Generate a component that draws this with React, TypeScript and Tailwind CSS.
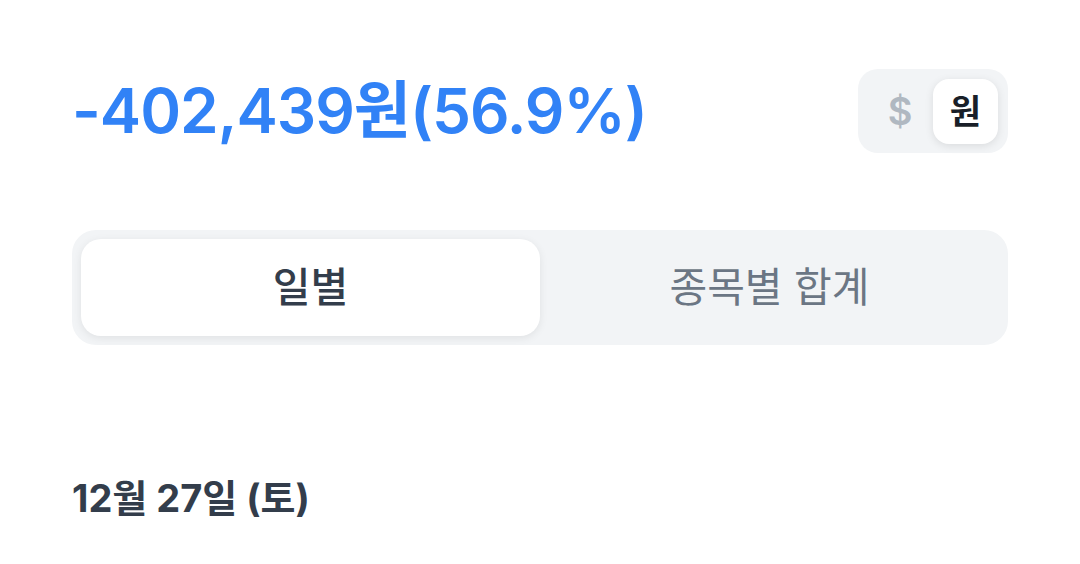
import React from "react";

const KR = { fontFamily: 'Inter, "Noto Sans CJK KR", sans-serif' };

export default function App() {
  return (
    <div className="w-[1080px] h-[564px] bg-white px-[72px] pt-[69px]" style={KR}>
      <div className="flex items-start justify-between">
        <div className="text-[62px] leading-[84px] font-semibold text-[#3182f6] tracking-[-1px]">
          -402,439원(56.9%)
        </div>
        <div className="flex items-center h-[84px] w-[150px] rounded-[20px] bg-[#f2f4f6] pl-[9px] pr-[10px] py-[9px]">
          <div className="flex-1 flex items-center justify-center text-[38px] font-semibold text-[#b0b8c1]">$</div>
          <div className="w-[65px] h-[65px] rounded-[16px] bg-white shadow-[0_2px_8px_rgba(0,0,0,0.10)] flex items-center justify-center text-[34px] font-bold text-[#191f28]">
            원
          </div>
        </div>
      </div>

      <div className="mt-[77px] h-[115px] rounded-[24px] bg-[#f2f4f6] p-[9px] flex">
        <div className="flex-1 rounded-[20px] bg-white shadow-[0_2px_8px_rgba(0,0,0,0.08)] flex items-center justify-center text-[41px] font-medium text-[#333d4b]">
          일별
        </div>
        <div className="flex-1 flex items-center justify-center text-[41px] font-normal text-[#6b7684]">
          종목별 합계
        </div>
      </div>

      <div className="mt-[131px] text-[38px] leading-[44px] font-bold text-[#333d4b]">
        12월 27일 (토)
      </div>
    </div>
  );
}
